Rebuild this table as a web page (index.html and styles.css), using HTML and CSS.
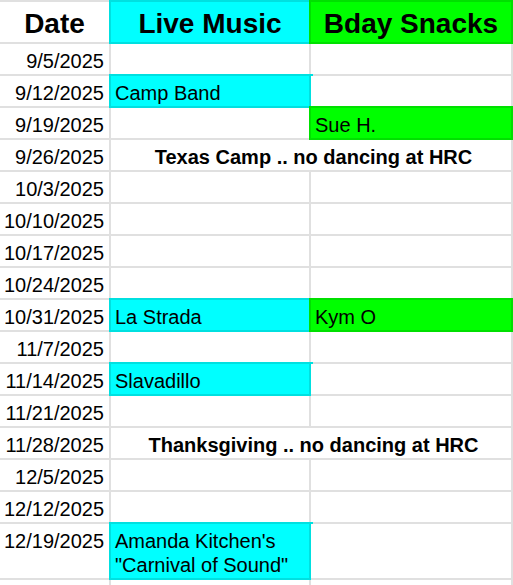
FILE: index.html
```html
<!DOCTYPE html>
<html>
<head>
<meta charset="utf-8">
<link rel="stylesheet" href="styles.css">
</head>
<body>
<div class="sheet">
  <div class="c h">Date</div>
  <div class="c h cyan">Live Music</div>
  <div class="c h green">Bday Snacks</div>

  <div class="c d">9/5/2025</div><div class="c"></div><div class="c"></div>
  <div class="c d">9/12/2025</div><div class="c cyan">Camp Band</div><div class="c"></div>
  <div class="c d">9/19/2025</div><div class="c"></div><div class="c green">Sue H.</div>
  <div class="c d">9/26/2025</div><div class="c m">Texas Camp .. no dancing at HRC</div>
  <div class="c d">10/3/2025</div><div class="c"></div><div class="c"></div>
  <div class="c d">10/10/2025</div><div class="c"></div><div class="c"></div>
  <div class="c d">10/17/2025</div><div class="c"></div><div class="c"></div>
  <div class="c d">10/24/2025</div><div class="c"></div><div class="c"></div>
  <div class="c d">10/31/2025</div><div class="c cyan">La Strada</div><div class="c green">Kym O</div>
  <div class="c d">11/7/2025</div><div class="c"></div><div class="c"></div>
  <div class="c d">11/14/2025</div><div class="c cyan">Slavadillo</div><div class="c"></div>
  <div class="c d">11/21/2025</div><div class="c"></div><div class="c"></div>
  <div class="c d">11/28/2025</div><div class="c m">Thanksgiving .. no dancing at HRC</div>
  <div class="c d">12/5/2025</div><div class="c"></div><div class="c"></div>
  <div class="c d">12/12/2025</div><div class="c"></div><div class="c"></div>
  <div class="c d">12/19/2025</div><div class="c cyan">Amanda Kitchen's "Carnival of Sound"</div><div class="c"></div>
  <div class="c d"></div><div class="c"></div><div class="c"></div>
</div>
</body>
</html>
```

FILE: styles.css
```css
html, body {
  margin: 0;
  padding: 0;
  background: #fff;
}
body {
  font-family: "Liberation Sans", Arial, sans-serif;
  color: #000;
  overflow: hidden;
}
.sheet {
  display: grid;
  grid-template-columns: 111px 200px 202px;
  border-top: 2px solid #e0e0e0;
}
.c {
  background: #fff;
  border-right: 2px solid #e0e0e0;
  border-bottom: 2px solid #e0e0e0;
  padding: 5px 4px 1px;
  font-size: 20px;
  line-height: 24px;
  min-height: 24px;
  white-space: normal;
}
.d {
  text-align: right;
  padding-right: 5px;
}
.h {
  font-size: 28px;
  font-weight: bold;
  text-align: center;
  line-height: 40px;
  height: 38px;
  min-height: 0;
  padding: 2px 4px 0;
  white-space: nowrap;
}
.m {
  grid-column: span 2;
  font-weight: bold;
  text-align: center;
  white-space: nowrap;
  padding-left: 9px;
}
.cyan {
  background: #00ffff;
  border-color: #00e0e0;
  box-shadow: 0 0 0 2px #00e0e0;
}
.green {
  background: #00ff00;
  border-color: #00e000;
  box-shadow: 0 0 0 2px #00e000;
}
```
